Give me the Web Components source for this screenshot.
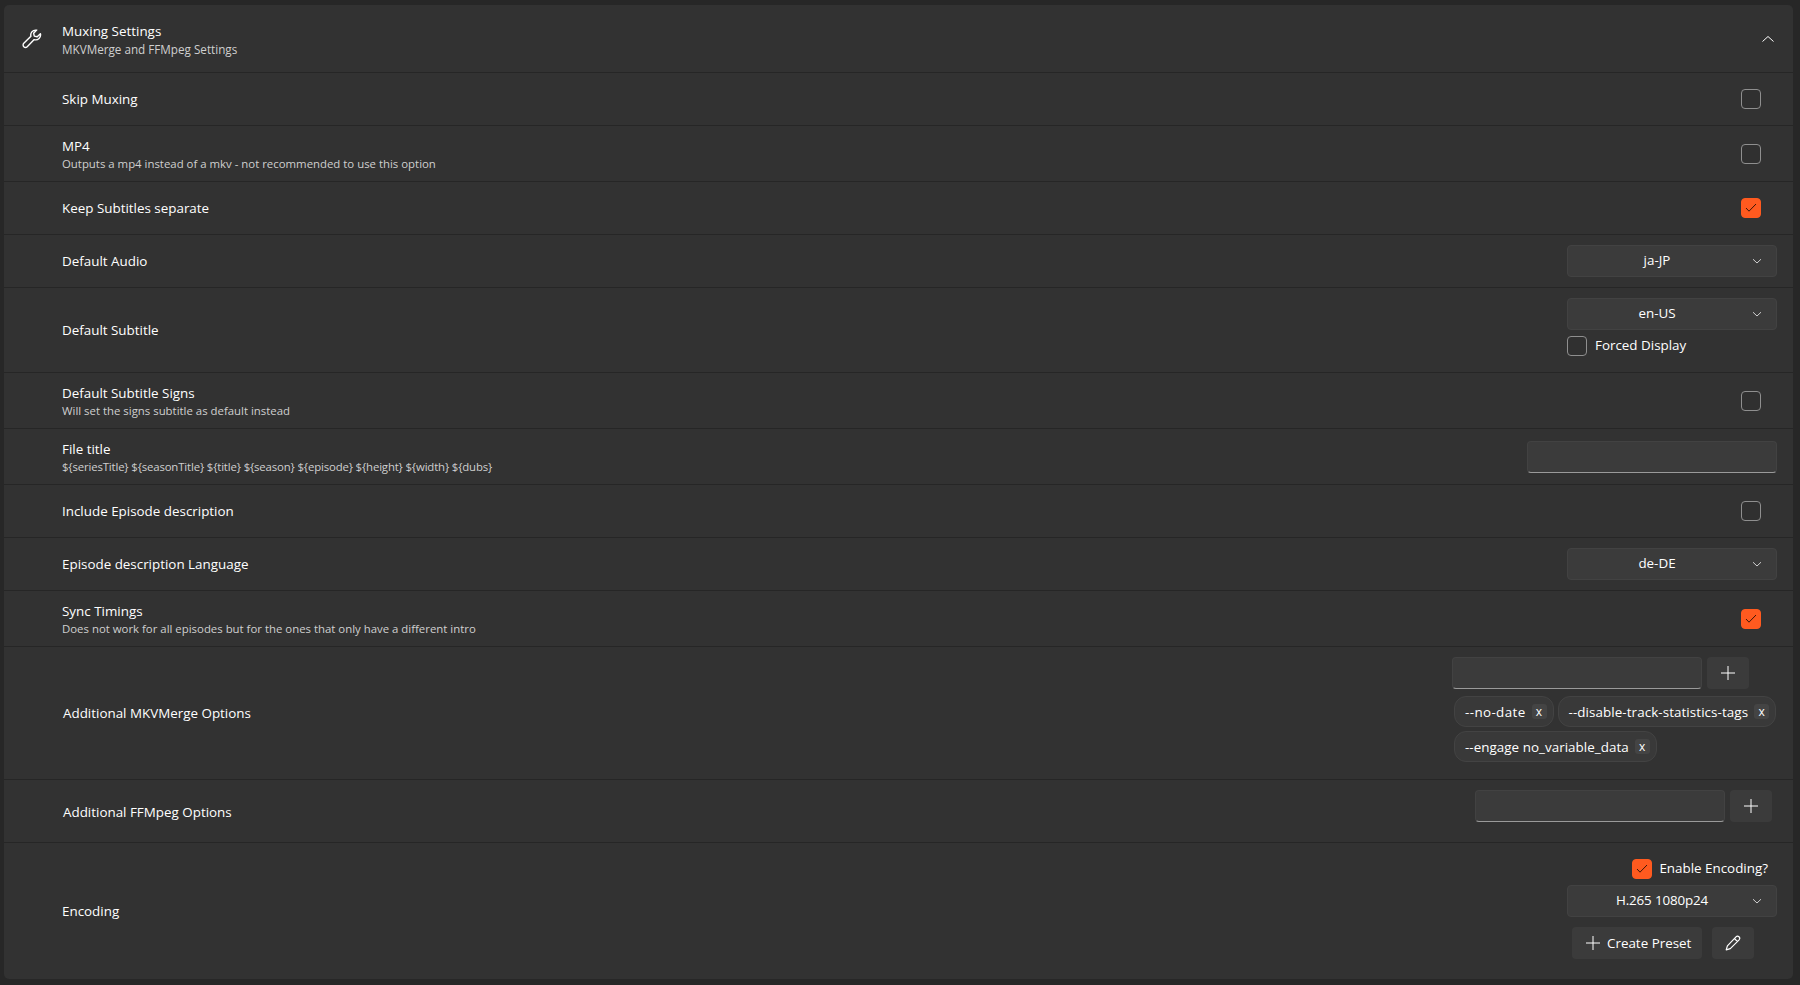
<!DOCTYPE html>
<html lang="en">
<head>
<meta charset="utf-8">
<title>Muxing Settings</title>
<style>
  html, body { margin: 0; height: 100%; background: #272727; }
  body {
    padding: 5px 7px 6px 4px;
    box-sizing: border-box;
    overflow: hidden;
    color: #fff;
    font: 13.4px/19px "Open Sans", "Noto Sans", sans-serif;
  }
</style>
</head>
<body>
<template id="row-template">
  <style>
    :host { display: flex; align-items: center; justify-content: space-between;
      padding: 10px 16px 10px 58px; border-bottom: 1px solid #262626; }
    :host([flush]) { border-bottom: 0; }
    :host([inset]) { padding-left: 59px; }
    .text { display: flex; flex-direction: column; }
    .text:has(.desc:not(:empty)) { padding-top: 1px; margin-bottom: -1px; }
    .desc { font-size: 11.4px; line-height: 16px; color: #cfcfcf; }
    .desc:empty { display: none; }
    :host([tight]) .desc { letter-spacing: -.16px; }
    :host([low]) .text { padding-top: 2px; }
    .control { display: flex; flex-direction: column; align-items: flex-end; justify-content: center; min-height: 32px; }
  </style>
  <div class="text"><span class="label"></span><span class="desc"></span></div>
  <div class="control"><slot></slot></div>
</template>

<template id="select-template">
  <style>
    :host { display: grid; grid-template-columns: 1fr 28px; align-items: center; width: 210px; height: 32px;
      box-sizing: border-box; background: #3b3b3b; border: 1px solid #424242; border-radius: 4px; }
    span { text-align: center; padding: 0 2px 1px 0; }
    :host([wide]) span { padding: 0 0 1px 8px; letter-spacing: -.15px; }
    svg { display: block; margin-left: 4px; }
  </style>
  <span><slot></slot></span>
  <svg width="10" height="10" viewBox="0 0 10 10"><path d="M1 3.2 5 7l4-3.8" fill="none" stroke="#cfcfcf"/></svg>
</template>

<settings-card>
  <setting-row label="Skip Muxing"><check-box></check-box></setting-row>
  <setting-row label="MP4" desc="Outputs a mp4 instead of a mkv - not recommended to use this option"><check-box></check-box></setting-row>
  <setting-row label="Keep Subtitles separate"><check-box checked></check-box></setting-row>
  <setting-row label="Default Audio"><drop-down>ja-JP</drop-down></setting-row>
  <setting-row label="Default Subtitle">
    <drop-down>en-US</drop-down>
    <check-box inline>Forced Display</check-box>
  </setting-row>
  <setting-row label="Default Subtitle Signs" desc="Will set the signs subtitle as default instead"><check-box></check-box></setting-row>
  <setting-row tight label="File title" desc="${seriesTitle} ${seasonTitle} ${title} ${season} ${episode} ${height} ${width} ${dubs}"><text-box></text-box></setting-row>
  <setting-row label="Include Episode description"><check-box></check-box></setting-row>
  <setting-row label="Episode description Language"><drop-down>de-DE</drop-down></setting-row>
  <setting-row label="Sync Timings" desc="Does not work for all episodes but for the ones that only have a different intro"><check-box checked></check-box></setting-row>
  <setting-row label="Additional MKVMerge Options" inset>
    <option-list>
      <option-tag style="letter-spacing: .38px">--no-date</option-tag>
      <option-tag style="letter-spacing: .08px">--disable-track-statistics-tags</option-tag>
      <option-tag style="letter-spacing: .04px">--engage no_variable_data</option-tag>
    </option-list>
  </setting-row>
  <setting-row low label="Additional FFMpeg Options" inset><option-list empty></option-list></setting-row>
  <setting-row label="Encoding" flush><encoding-panel></encoding-panel></setting-row>
</settings-card>

<script>
const icons = {
  plus: '<svg width="16" height="16" viewBox="0 0 16 16"><path d="M8 1v14M1 8h14" stroke="#fff" fill="none"/></svg>',
  pencil: '<svg width="18" height="18" viewBox="0 0 18 18"><path d="M12 2.9a2.1 2.1 0 0 1 3.1 2.9L6.3 14.6 2.2 15.9l1.2-4.1zM10.4 4.5l3.1 3.1" fill="none" stroke="#fff" stroke-width="1.2" stroke-linejoin="round"/></svg>',
  wrench: '<svg width="20" height="20" viewBox="0 0 20 20"><path d="M13.8 1.1a4.9 4.9 0 0 0-4.9 6.1L1.8 14.3a2.4 2.4 0 0 0 3.4 3.4l7-7.1a4.9 4.9 0 0 0 6.2-5.9l-3.2 3.1-2.9-.7-.7-2.9 3.1-3.1a5 5 0 0 0-.9 0z" fill="none" stroke="#fff" stroke-width="1.4" stroke-linejoin="round"/></svg>'
};

function shadowFrom(element, html) {
  element.attachShadow({ mode: "open" }).innerHTML = html;
}

class SettingsCard extends HTMLElement {
  connectedCallback() {
    shadowFrom(this, `
      <style>
        :host { display: block; background: #323232; border-radius: 5px; }
        header { display: flex; align-items: center; height: 67px; padding: 0 16px 0 18px;
          border-bottom: 1px solid #262626; box-sizing: content-box; }
        .icon { width: 20px; height: 20px; margin-right: 20px; }
        .titles { flex: 1; display: flex; flex-direction: column; padding-top: 2px; }
        small { font-size: 11.7px; line-height: 16px; color: #cfcfcf; }
        .toggle { display: block; margin-right: 2px; }
      </style>
      <header>
        <div class="icon">${icons.wrench}</div>
        <div class="titles"><span>Muxing Settings</span><small>MKVMerge and FFMpeg Settings</small></div>
        <svg class="toggle" width="14" height="14" viewBox="0 0 14 14"><path d="M1.5 9.5 7 4.5l5.5 5" fill="none" stroke="#fff"/></svg>
      </header>
      <slot></slot>`);
  }
}

class SettingRow extends HTMLElement {
  connectedCallback() {
    const root = this.attachShadow({ mode: "open" });
    root.append(document.getElementById("row-template").content.cloneNode(true));
    root.querySelector(".label").textContent = this.getAttribute("label");
    root.querySelector(".desc").textContent = this.getAttribute("desc") || "";
  }
}

class CheckBox extends HTMLElement {
  connectedCallback() {
    const mark = this.hasAttribute("checked")
      ? '<svg width="12" height="12" viewBox="0 0 12 12"><path d="M1 6 4 9.2l7-7.2" fill="none" stroke="#3a1608" stroke-width="1"/></svg>'
      : "";
    shadowFrom(this, `
      <style>
        :host { display: flex; align-items: center; height: 32px; margin-right: 16px; }
        :host([inline]) { margin-right: 0; width: 210px; }
        :host([bare]) { margin-right: 9px; }
        .box { width: 20px; height: 20px; box-sizing: border-box; border: 1px solid #8f8f8f; border-radius: 4px;
          display: grid; place-items: center; background: #303030; flex: none; }
        :host([checked]) .box { background: #ff5a1f; border-color: #ff5a1f; }
        .text { padding: 0 0 2px 8px; }
        :host([bare]) .text { padding-left: 7px; }
      </style>
      <span class="box">${mark}</span>
      ${this.textContent.trim() ? '<span class="text"><slot></slot></span>' : ""}`);
  }
}

class DropDown extends HTMLElement {
  connectedCallback() {
    const root = this.attachShadow({ mode: "open" });
    root.append(document.getElementById("select-template").content.cloneNode(true));
  }
}

class TextBox extends HTMLElement {
  connectedCallback() {
    shadowFrom(this, `
      <style>
        :host { display: block; width: 250px; height: 32px; box-sizing: border-box; background: #3b3b3b;
          border: 1px solid #424242; border-bottom: 1px solid #9a9a9a; border-radius: 4px; }
      </style>`);
  }
}

class IconButton extends HTMLElement {
  connectedCallback() {
    shadowFrom(this, `
      <style>
        :host { display: inline-flex; align-items: center; justify-content: center; gap: 6px; box-sizing: border-box;
          height: 32px; min-width: 42px; padding: 0 11px 0 13px; background: #3b3b3b; border-radius: 4px; }
        :host(:empty) { padding: 0; }
        svg { display: block; }
      </style>
      ${icons[this.getAttribute("icon")]}<slot></slot>`);
  }
}

class OptionTag extends HTMLElement {
  connectedCallback() {
    shadowFrom(this, `
      <style>
        :host { display: inline-flex; align-items: center; height: 31px; box-sizing: border-box; padding: 0 6px 0 10px;
          background: #393939; border: 1px solid #434343; border-radius: 12px; }
        span { position: relative; top: 1px; }
        b { display: grid; place-items: center; width: 15px; height: 15px; margin-left: 6px; background: #444;
          border-radius: 3px; font-weight: 400; font-size: 12px; line-height: 1; }
      </style>
      <span><slot></slot></span><b>x</b>`);
  }
}

class OptionList extends HTMLElement {
  connectedCallback() {
    shadowFrom(this, `
      <style>
        :host { display: block; width: 325px; }
        .add { display: flex; align-items: center; gap: 5px; justify-content: flex-end; padding-right: 28px; }
        :host([empty]) { width: auto; padding-bottom: 10px; }
        :host([empty]) .add { padding-right: 5px; }
        .tags { display: flex; flex-wrap: wrap; gap: 4px; padding: 7px 0 7px 2px; }
      </style>
      <div class="add"><text-box></text-box><icon-button icon="plus"></icon-button></div>
      ${this.hasAttribute("empty") ? "" : '<div class="tags"><slot></slot></div>'}`);
  }
}

class EncodingPanel extends HTMLElement {
  connectedCallback() {
    shadowFrom(this, `
      <style>
        :host { display: flex; flex-direction: column; align-items: flex-end; width: 210px; padding-bottom: 10px; }
        .actions { display: flex; align-self: flex-start; gap: 10px; margin: 10px 0 0 5px; }
      </style>
      <check-box checked bare>Enable Encoding?</check-box>
      <drop-down wide>H.265 1080p24</drop-down>
      <div class="actions">
        <icon-button icon="plus">Create Preset</icon-button>
        <icon-button icon="pencil"></icon-button>
      </div>`);
  }
}

customElements.define("settings-card", SettingsCard);
customElements.define("setting-row", SettingRow);
customElements.define("check-box", CheckBox);
customElements.define("drop-down", DropDown);
customElements.define("text-box", TextBox);
customElements.define("icon-button", IconButton);
customElements.define("option-tag", OptionTag);
customElements.define("option-list", OptionList);
customElements.define("encoding-panel", EncodingPanel);
</script>
</body>
</html>
